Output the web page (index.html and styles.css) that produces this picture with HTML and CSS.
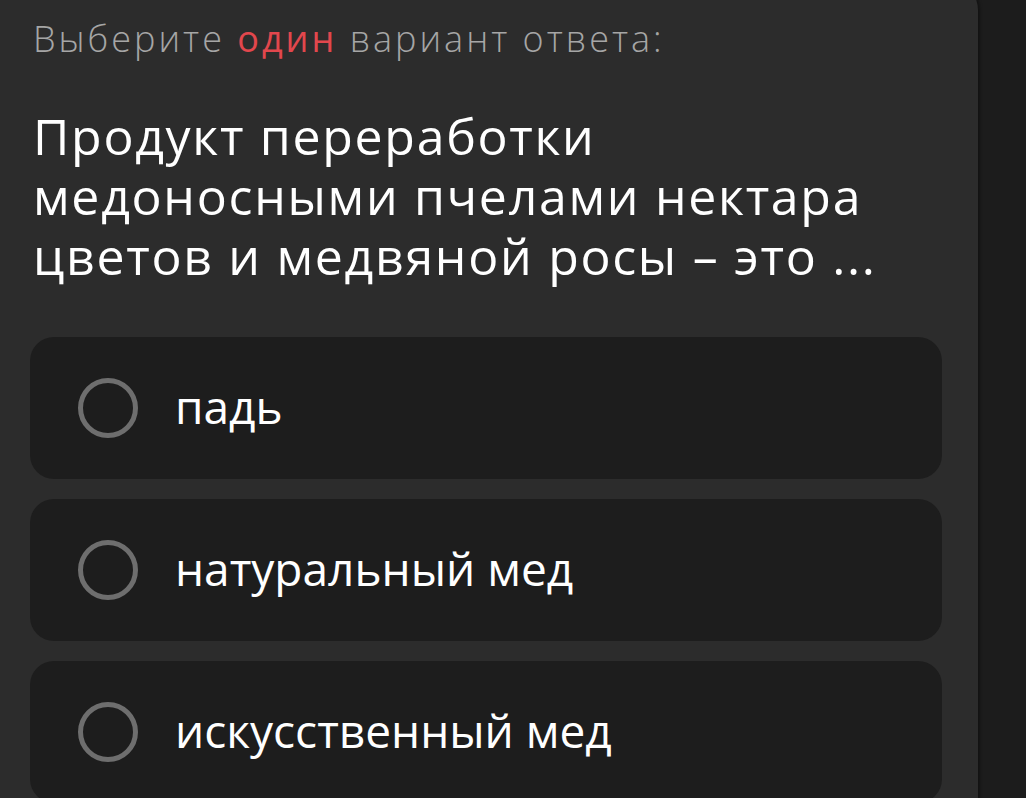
FILE: index.html
```html
<!DOCTYPE html>
<html lang="ru">
<head>
<meta charset="utf-8">
<link rel="stylesheet" href="styles.css">
</head>
<body>
<div class="screen">
  <main class="card">
    <p class="hint">Выберите <span class="accent">один</span> вариант ответа:</p>
    <h1 class="question">Продукт переработки<br>медоносными пчелами нектара<br>цветов и медвяной росы – это ...</h1>
    <div class="options">
      <div class="option"><span class="radio"></span><span class="label">падь</span></div>
      <div class="option"><span class="radio"></span><span class="label">натуральный мед</span></div>
      <div class="option"><span class="radio"></span><span class="label">искусственный мед</span></div>
    </div>
  </main>
</div>
</body>
</html>
```
FILE: styles.css
```css
html, body {
  margin: 0;
  padding: 0;
  background: #1c1c1c;
  height: 100%;
  overflow: hidden;
}
body {
  font-family: "Open Sans", "DejaVu Sans", sans-serif;
}
.screen {
  display: flex;
  height: 798px;
}
.card {
  box-sizing: border-box;
  width: 978px;
  flex: none;
  margin-top: -20px;
  padding: 20px 36px 0 30px;
  background: #2c2c2c;
  border-radius: 0 30px 0 0;
  box-shadow: 2px 0 3px rgba(0,0,0,0.35);
  height: 840px;
}
.hint {
  margin: 14px 0 0 3px;
  font-size: 36px;
  line-height: 50px;
  letter-spacing: 3px;
  color: #a6a6a6;
  font-weight: 300;
}
.accent {
  color: #e2474d;
  font-weight: 400;
}
.question {
  margin: 42px 0 0 3px;
  font-size: 50px;
  line-height: 60px;
  letter-spacing: 1.7px;
  font-weight: 400;
  color: #ffffff;
}
.options {
  display: flex;
  flex-direction: column;
  gap: 20px;
  margin-top: 51px;
}
.option {
  display: flex;
  align-items: center;
  height: 142px;
  padding-left: 48px;
  background: #1d1d1d;
  border-radius: 24px;
}
.radio {
  width: 50px;
  height: 50px;
  border: 5px solid #6e6e6e;
  border-radius: 50%;
  flex: none;
}
.label {
  margin-left: 37px;
  font-size: 46px;
  color: #ffffff;
  line-height: 60px;
  padding-bottom: 4px;
}
```
